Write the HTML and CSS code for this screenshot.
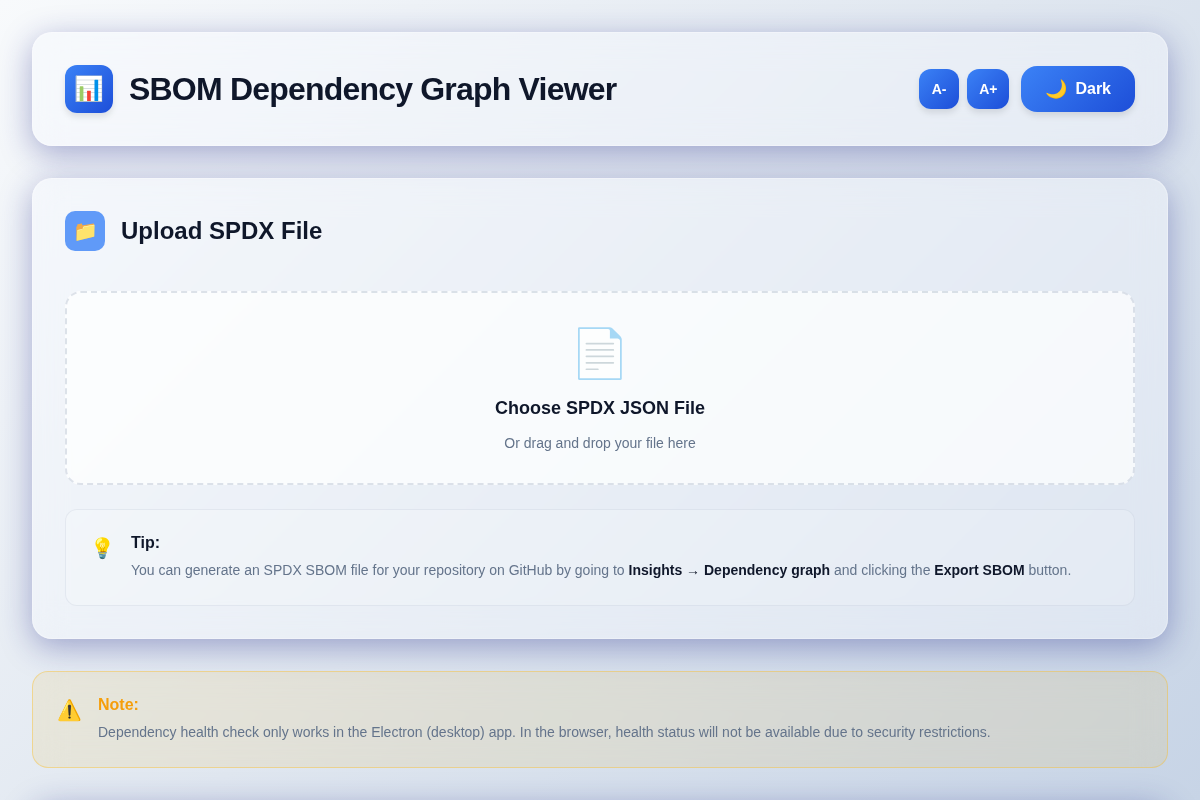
FILE: index.html
```html
<!DOCTYPE html>
<html lang="en">
<head>
  <meta charset="utf-8">
  <meta name="viewport" content="width=device-width, initial-scale=1">
  <title>SBOM Dependency Graph Viewer</title>
  <link rel="stylesheet" href="styles.css">
</head>
<body>
  <div class="page">
    <header class="glass header">
      <div class="brand">
        <span class="brand-icon" aria-hidden="true">📊</span>
        <h1 class="brand-title">SBOM Dependency Graph Viewer</h1>
      </div>
      <div class="controls">
        <div class="font-controls">
          <button class="btn btn-size" type="button">A-</button>
          <button class="btn btn-size" type="button">A+</button>
        </div>
        <button class="btn btn-theme" type="button"><span class="btn-emoji" aria-hidden="true">🌙</span><span>Dark</span></button>
      </div>
    </header>

    <main class="content">
      <section class="glass upload">
        <div class="section-head">
          <span class="section-icon" aria-hidden="true">📁</span>
          <h2 class="section-title">Upload SPDX File</h2>
        </div>
        <label class="dropzone" for="spdx-file">
          <input class="file-input" id="spdx-file" type="file" accept=".json">
          <span class="dropzone-icon" aria-hidden="true">📄</span>
          <span class="dropzone-title">Choose SPDX JSON File</span>
          <span class="dropzone-hint">Or drag and drop your file here</span>
        </label>
        <div class="notice notice-tip">
          <span class="notice-icon" aria-hidden="true">💡</span>
          <div class="notice-body">
            <strong class="notice-title">Tip:</strong>
            <p class="notice-text">You can generate an SPDX SBOM file for your repository on GitHub by going to <strong>Insights → Dependency graph</strong> and clicking the <strong>Export SBOM</strong> button.</p>
          </div>
        </div>
      </section>

      <aside class="notice notice-warning">
        <span class="notice-icon" aria-hidden="true">⚠️</span>
        <div class="notice-body">
          <strong class="notice-title">Note:</strong>
          <p class="notice-text">Dependency health check only works in the Electron (desktop) app. In the browser, health status will not be available due to security restrictions.</p>
        </div>
      </aside>

      <section class="glass graph"></section>
    </main>
  </div>
</body>
</html>
```
FILE: styles.css
```css
* {
  box-sizing: border-box;
  margin: 0;
  padding: 0;
}

body {
  min-height: 100vh;
  font-family: "Liberation Sans", Arial, sans-serif;
  color: #0f172a;
  background: linear-gradient(135deg, #f8fafc 0%, #e0e7f0 50%, #c7d4e6 100%) fixed;
}

.page,
.content {
  display: flex;
  flex-direction: column;
  gap: 32px;
}

.page {
  max-width: 1400px;
  margin: 0 auto;
  padding: 32px;
}

.glass {
  padding: 32px;
  border: 1px solid rgba(255, 255, 255, 0.3);
  border-radius: 20px;
  background: rgba(248, 250, 254, 0.4);
  box-shadow: 0 8px 32px rgba(31, 38, 135, 0.37);
  backdrop-filter: blur(16px);
}

.header {
  display: flex;
  flex-wrap: wrap;
  align-items: center;
  justify-content: space-between;
  gap: 16px;
}

.brand,
.section-head {
  display: flex;
  align-items: center;
  gap: 16px;
}

.brand-icon {
  display: flex;
  align-items: center;
  justify-content: center;
  width: 48px;
  height: 48px;
  border-radius: 12px;
  font-size: 24px;
  background: linear-gradient(135deg, #3b82f6, #1d4ed8);
  box-shadow: 0 4px 6px rgba(0, 0, 0, 0.1);
}

.brand-title {
  font-size: 32px;
  line-height: 36px;
  letter-spacing: -0.025em;
}

.controls {
  display: flex;
  align-items: center;
  gap: 12px;
}

.font-controls {
  display: flex;
  gap: 8px;
}

.btn {
  border: 0;
  font-family: inherit;
  font-weight: 600;
  color: #fff;
  background: linear-gradient(135deg, #3b82f6, #1d4ed8);
  box-shadow: 0 4px 6px rgba(0, 0, 0, 0.1);
  cursor: pointer;
}

.btn-size {
  min-width: 40px;
  height: 40px;
  padding: 0 12px;
  border-radius: 12px;
  font-size: 14px;
}

.btn-theme {
  display: flex;
  align-items: center;
  gap: 8px;
  height: 46px;
  padding: 0 24px;
  border-radius: 16px;
  font-size: 16px;
}

.btn-emoji {
  font-size: 18px;
}

.section-head {
  margin-bottom: 40px;
}

.section-icon {
  display: flex;
  align-items: center;
  justify-content: center;
  width: 40px;
  height: 40px;
  border-radius: 10px;
  font-size: 20px;
  background: #609af8;
}

.section-title {
  font-size: 24px;
  line-height: 28px;
}

.dropzone {
  display: flex;
  flex-direction: column;
  align-items: center;
  margin-bottom: 24px;
  padding: 32px;
  border: 2px dashed rgba(148, 163, 184, 0.3);
  border-radius: 16px;
  background: rgba(255, 255, 255, 0.7);
  cursor: pointer;
}

.file-input {
  display: none;
}

.dropzone-icon {
  margin-bottom: 14px;
  font-size: 48px;
  line-height: 58px;
  opacity: 0.6;
}

.dropzone-title {
  margin-bottom: 16px;
  font-size: 18px;
  font-weight: 600;
  line-height: 22px;
}

.dropzone-hint {
  font-size: 14px;
  line-height: 16px;
  color: #64748b;
}

.notice {
  display: flex;
  align-items: flex-start;
  gap: 16px;
  padding: 24px;
  border: 1px solid rgba(148, 163, 184, 0.15);
  border-radius: 12px;
}

.notice-tip {
  background: rgba(255, 255, 255, 0.15);
}

.notice-warning {
  border-color: rgba(251, 191, 36, 0.4);
  border-radius: 16px;
  background: rgba(245, 180, 11, 0.1);
  backdrop-filter: blur(16px);
}

.notice-icon {
  font-size: 20px;
  line-height: 28px;
}

.notice-title {
  display: block;
  margin-bottom: 8px;
  font-size: 16px;
  line-height: 17px;
}

.notice-warning .notice-title {
  color: #f59e0b;
}

.notice-text {
  font-size: 14px;
  line-height: 22px;
  color: #64748b;
}

.notice-text strong {
  color: #0f172a;
}

.graph {
  min-height: 320px;
}
```
